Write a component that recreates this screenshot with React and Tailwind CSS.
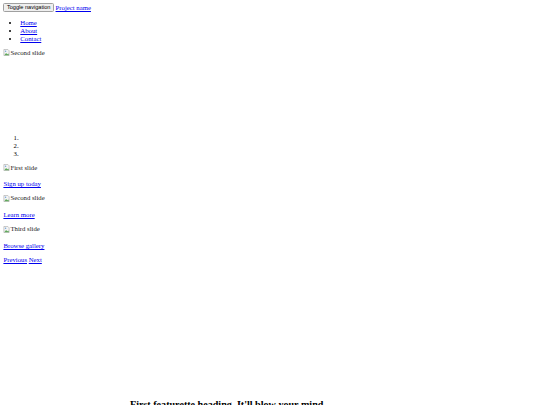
function BrokenImage({ alt, className = '' }) {
  return (
    <div className={`flex items-center h-[7.76px] ${className}`}>
      <svg width="7" height="7" viewBox="0 0 16 16" className="shrink-0">
        <path d="M2 1h9l3 3v11H2z" fill="#f4f4f4" stroke="#9a9a9a" strokeWidth="1.2" />
        <path d="M3 14l4-5 3 3 2-2 2 4z" fill="#5fa85a" />
        <circle cx="6" cy="5" r="1.6" fill="#6aa0d8" />
      </svg>
      <span className="text-[#222]">{alt}</span>
    </div>
  );
}

function Link({ children, className = '' }) {
  return <a href="#" className={`text-[#0000ee] underline ${className}`}>{children}</a>;
}

export default function App() {
  return (
    <div
      className="min-h-[405px] bg-white text-black text-[6.75px] leading-[7.76px] pt-[3.4px] px-[3.4px]"
      style={{ fontFamily: '"Liberation Serif", "Times New Roman", serif' }}
    >
      {/* navbar */}
      <div className="flex items-center gap-[1.6px] h-[9px]">
        <button
          className="h-[9px] px-[2.5px] bg-[#efefef] border-[0.5px] border-[#a0a0a0] rounded-[1.5px] text-[5.6px] leading-none text-black"
          style={{ fontFamily: '"Liberation Sans", Arial, sans-serif' }}
        >
          Toggle navigation
        </button>
        <Link>Project name</Link>
      </div>
      <ul className="list-disc pl-[16.9px] mt-[6.6px] mb-[6.75px]">
        <li><Link>Home</Link></li>
        <li><Link>About</Link></li>
        <li><Link>Contact</Link></li>
      </ul>

      <BrokenImage alt="Second slide" />

      {/* carousel */}
      <ol className="list-decimal pl-[16.9px] mt-[77.2px]">
        <li>&nbsp;</li>
        <li>&nbsp;</li>
        <li>&nbsp;</li>
      </ol>

      <BrokenImage alt="First slide" className="mt-[6.5px]" />
      <p className="mt-[8.8px]"><Link>Sign up today</Link></p>
      <BrokenImage alt="Second slide" className="mt-[6.2px]" />
      <p className="mt-[9.2px]"><Link>Learn more</Link></p>
      <BrokenImage alt="Third slide" className="mt-[6.2px]" />
      <p className="mt-[9.2px]"><Link>Browse gallery</Link></p>
      <p className="mt-[6.2px]">
        <Link>Previous</Link> <Link>Next</Link>
      </p>

      {/* featurette */}
      <h2 className="mt-[135.5px] ml-[126.6px] text-[10.1px] leading-[11.6px] font-bold whitespace-nowrap">
        First featurette heading. It'll blow your mind.
      </h2>
    </div>
  );
}
